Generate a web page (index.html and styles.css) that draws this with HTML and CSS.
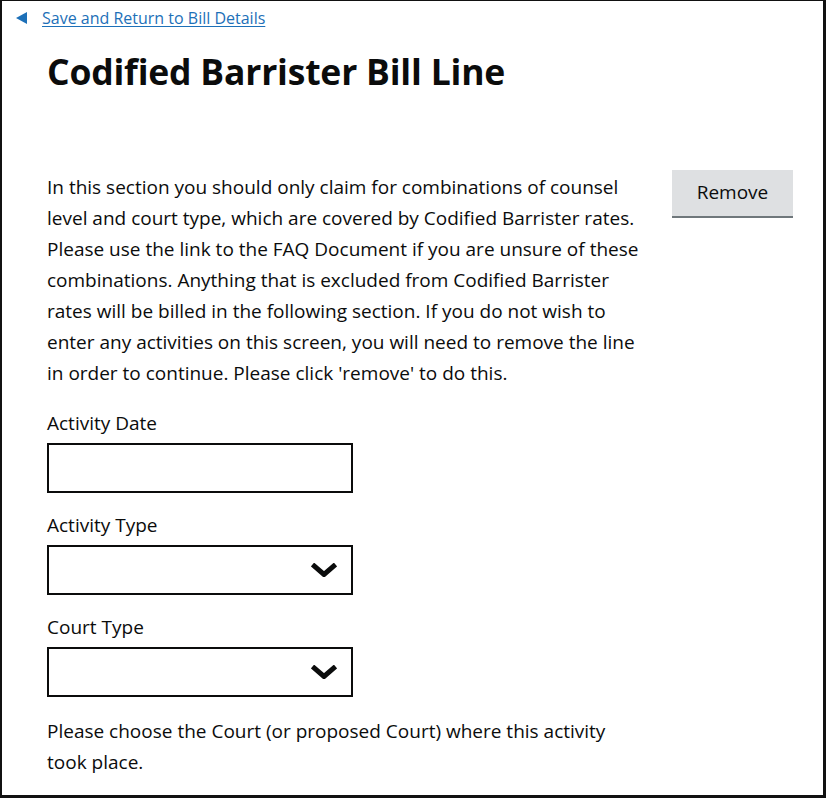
FILE: index.html
```html
<!DOCTYPE html>
<html lang="en">
<head>
<meta charset="utf-8">
<title>Codified Barrister Bill Line</title>
<link rel="stylesheet" href="styles.css">
</head>
<body>
<div class="frame">
  <div class="back">
    <span class="back-arrow"></span>
    <a class="back-link" href="#">Save and Return to Bill Details</a>
  </div>
  <main class="main">
    <h1 class="title">Codified Barrister Bill Line</h1>
    <div class="row">
      <div class="col">
        <p class="intro">In this section you should only claim for combinations of counsel level and court type, which are covered by Codified Barrister rates. Please use the link to the FAQ Document if you are unsure of these combinations. Anything that is excluded from Codified Barrister rates will be billed in the following section. If you do not wish to enter any activities on this screen, you will need to remove the line in order to continue. Please click 'remove' to do this.</p>
        <div class="field">
          <label class="label">Activity Date</label>
          <div class="input"></div>
        </div>
        <div class="field">
          <label class="label">Activity Type</label>
          <div class="input select">
            <svg class="chev" width="26" height="14" viewBox="0 0 26 14"><path d="M1.5 1.5 L13 11.5 L24.5 1.5" fill="none" stroke="#0b0c0c" stroke-width="5" stroke-linejoin="miter"/></svg>
          </div>
        </div>
        <div class="field">
          <label class="label">Court Type</label>
          <div class="input select">
            <svg class="chev" width="26" height="14" viewBox="0 0 26 14"><path d="M1.5 1.5 L13 11.5 L24.5 1.5" fill="none" stroke="#0b0c0c" stroke-width="5" stroke-linejoin="miter"/></svg>
          </div>
          <p class="hint">Please choose the Court (or proposed Court) where this activity took place.</p>
        </div>
      </div>
      <button class="btn" type="button">Remove</button>
    </div>
  </main>
</div>
</body>
</html>
```

FILE: styles.css
```css
html, body {
  margin: 0;
  padding: 0;
  background: #fff;
}
.frame {
  box-sizing: border-box;
  width: 826px;
  height: 798px;
  border-style: solid;
  border-color: #111;
  border-width: 1px 3px 3px 2px;
  background: #fff;
  font-family: "Open Sans", "Liberation Sans", Arial, sans-serif;
  color: #0b0c0c;
  overflow: hidden;
}
.back {
  display: flex;
  align-items: center;
  padding: 8px 0 0 14px;
  height: 18px;
}
.back-arrow {
  width: 0;
  height: 0;
  border-top: 6px solid transparent;
  border-bottom: 6px solid transparent;
  border-right: 11px solid #1d70b8;
  margin-right: 15px;
}
.back-link {
  font-size: 16px;
  color: #1d70b8;
  text-decoration: underline;
  text-underline-offset: 2px;
}
.main {
  padding: 0 30px 0 45px;
}
.title {
  margin: 23px 0 0;
  font-size: 35.5px;
  line-height: 42px;
  font-weight: 700;
  letter-spacing: -0.2px;
}
.row {
  display: flex;
  align-items: flex-start;
  margin-top: 80px;
}
.col {
  width: 598px;
}
.intro {
  margin: 0;
  font-size: 19px;
  line-height: 31px;
}
.field {
  margin-top: 21px;
}
.field + .field {
  margin-top: 19px;
}
.label {
  display: block;
  font-size: 19px;
  line-height: 26px;
  margin-bottom: 7px;
}
.input {
  box-sizing: border-box;
  width: 306px;
  height: 50px;
  border: 2px solid #0b0c0c;
  display: flex;
  align-items: center;
  justify-content: flex-end;
  padding-right: 14px;
}
.hint {
  margin: 19px 0 0;
  font-size: 19px;
  line-height: 31px;
  width: 580px;
}
.btn {
  margin-left: auto;
  margin-top: -2px;
  width: 121px;
  height: 48px;
  border: 0;
  border-bottom: 2px solid #6f777b;
  background: #dee0e2;
  color: #0b0c0c;
  font-family: "Open Sans", "Liberation Sans", Arial, sans-serif;
  font-size: 19px;
  padding: 0 0 2px;
}
```
